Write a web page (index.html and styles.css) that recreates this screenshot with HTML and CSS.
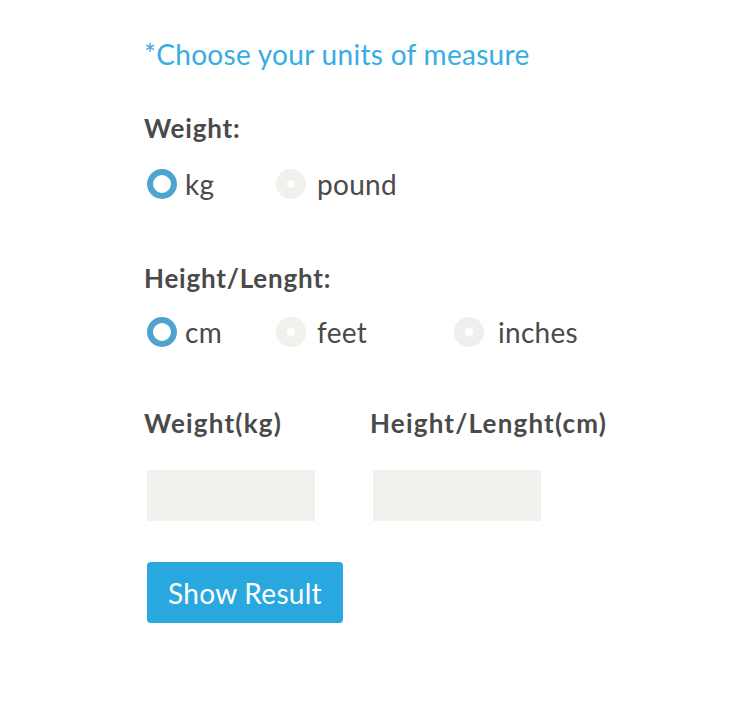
FILE: index.html
```html
<!DOCTYPE html>
<html>
<head>
<meta charset="utf-8">
<link rel="stylesheet" href="styles.css">
</head>
<body>
<div class="form">
  <p class="note">*Choose your units of measure</p>
  <h3 class="group-title">Weight:</h3>
  <div class="radios first">
    <label class="opt w129"><span class="radio on"></span><span>kg</span></label>
    <label class="opt off"><span class="radio"></span><span>pound</span></label>
  </div>
  <h3 class="group-title second">Height/Lenght:</h3>
  <div class="radios">
    <label class="opt w129"><span class="radio on"></span><span>cm</span></label>
    <label class="opt off w178"><span class="radio"></span><span>feet</span></label>
    <label class="opt off wide"><span class="radio alt"></span><span>inches</span></label>
  </div>
  <div class="fields">
    <div class="field">
      <h3 class="field-label">Weight(kg)</h3>
      <div class="input"></div>
    </div>
    <div class="field">
      <h3 class="field-label">Height/Lenght(cm)</h3>
      <div class="input"></div>
    </div>
  </div>
  <button class="btn">Show Result</button>
</div>
</body>
</html>
```
FILE: styles.css
```css
html, body {
  margin: 0;
  padding: 0;
  background: #ffffff;
}
body {
  font-family: Lato, "Open Sans", sans-serif;
  color: #4a4a4a;
}
.form {
  padding: 37px 0 0 144px;
  display: flex;
  flex-direction: column;
  align-items: flex-start;
}
.note {
  margin: 0;
  font-size: 28px;
  line-height: 34px;
  letter-spacing: 0.3px;
  color: #36ade3;
}
.group-title {
  margin: 41px 0 0 0;
  font-size: 26px;
  line-height: 32px;
  letter-spacing: 0.8px;
  font-weight: 700;
  color: #4a4a4a;
}
.group-title.second {
  margin-top: 63px;
}
.radios {
  display: flex;
  align-items: center;
  height: 30px;
  margin: 23px 0 0 3px;
}
.radios.first {
  margin-top: 25px;
}
.opt {
  display: flex;
  align-items: center;
  gap: 8px;
  font-size: 28px;
  line-height: 30px;
  letter-spacing: 0.3px;
}
.opt.off {
  gap: 11px;
}
.opt.off.wide {
  gap: 14px;
}
.w129 { width: 129px; }
.w178 { width: 178px; }
.radio {
  box-sizing: border-box;
  width: 30px;
  height: 30px;
  border-radius: 50%;
  background: #f1f0ed;
  position: relative;
  flex: none;
}
.radio.alt {
  background: #efefef;
}
.radio::after {
  content: "";
  position: absolute;
  left: 11px;
  top: 11px;
  width: 8px;
  height: 8px;
  border-radius: 50%;
  background: #ffffff;
}
.radio.on {
  background: #ffffff;
  border: 6px solid #4ea3cf;
}
.radio.on::after {
  display: none;
}
.fields {
  display: flex;
  margin-top: 60px;
}
.field {
  width: 226px;
  display: flex;
  flex-direction: column;
}
.field-label {
  margin: 0;
  font-size: 26px;
  line-height: 32px;
  letter-spacing: 1.2px;
  font-weight: 700;
  color: #4a4a4a;
  white-space: nowrap;
}
.input {
  margin: 31px 0 0 3px;
  width: 168px;
  height: 51px;
  background: #f2f1ee;
}
.btn {
  margin: 41px 0 0 3px;
  width: 196px;
  height: 61px;
  border: none;
  border-radius: 4px;
  background: #29a8e0;
  color: #ffffff;
  font-family: Lato, "Open Sans", sans-serif;
  font-size: 28px;
  letter-spacing: 0.3px;
  padding: 0;
}
```
